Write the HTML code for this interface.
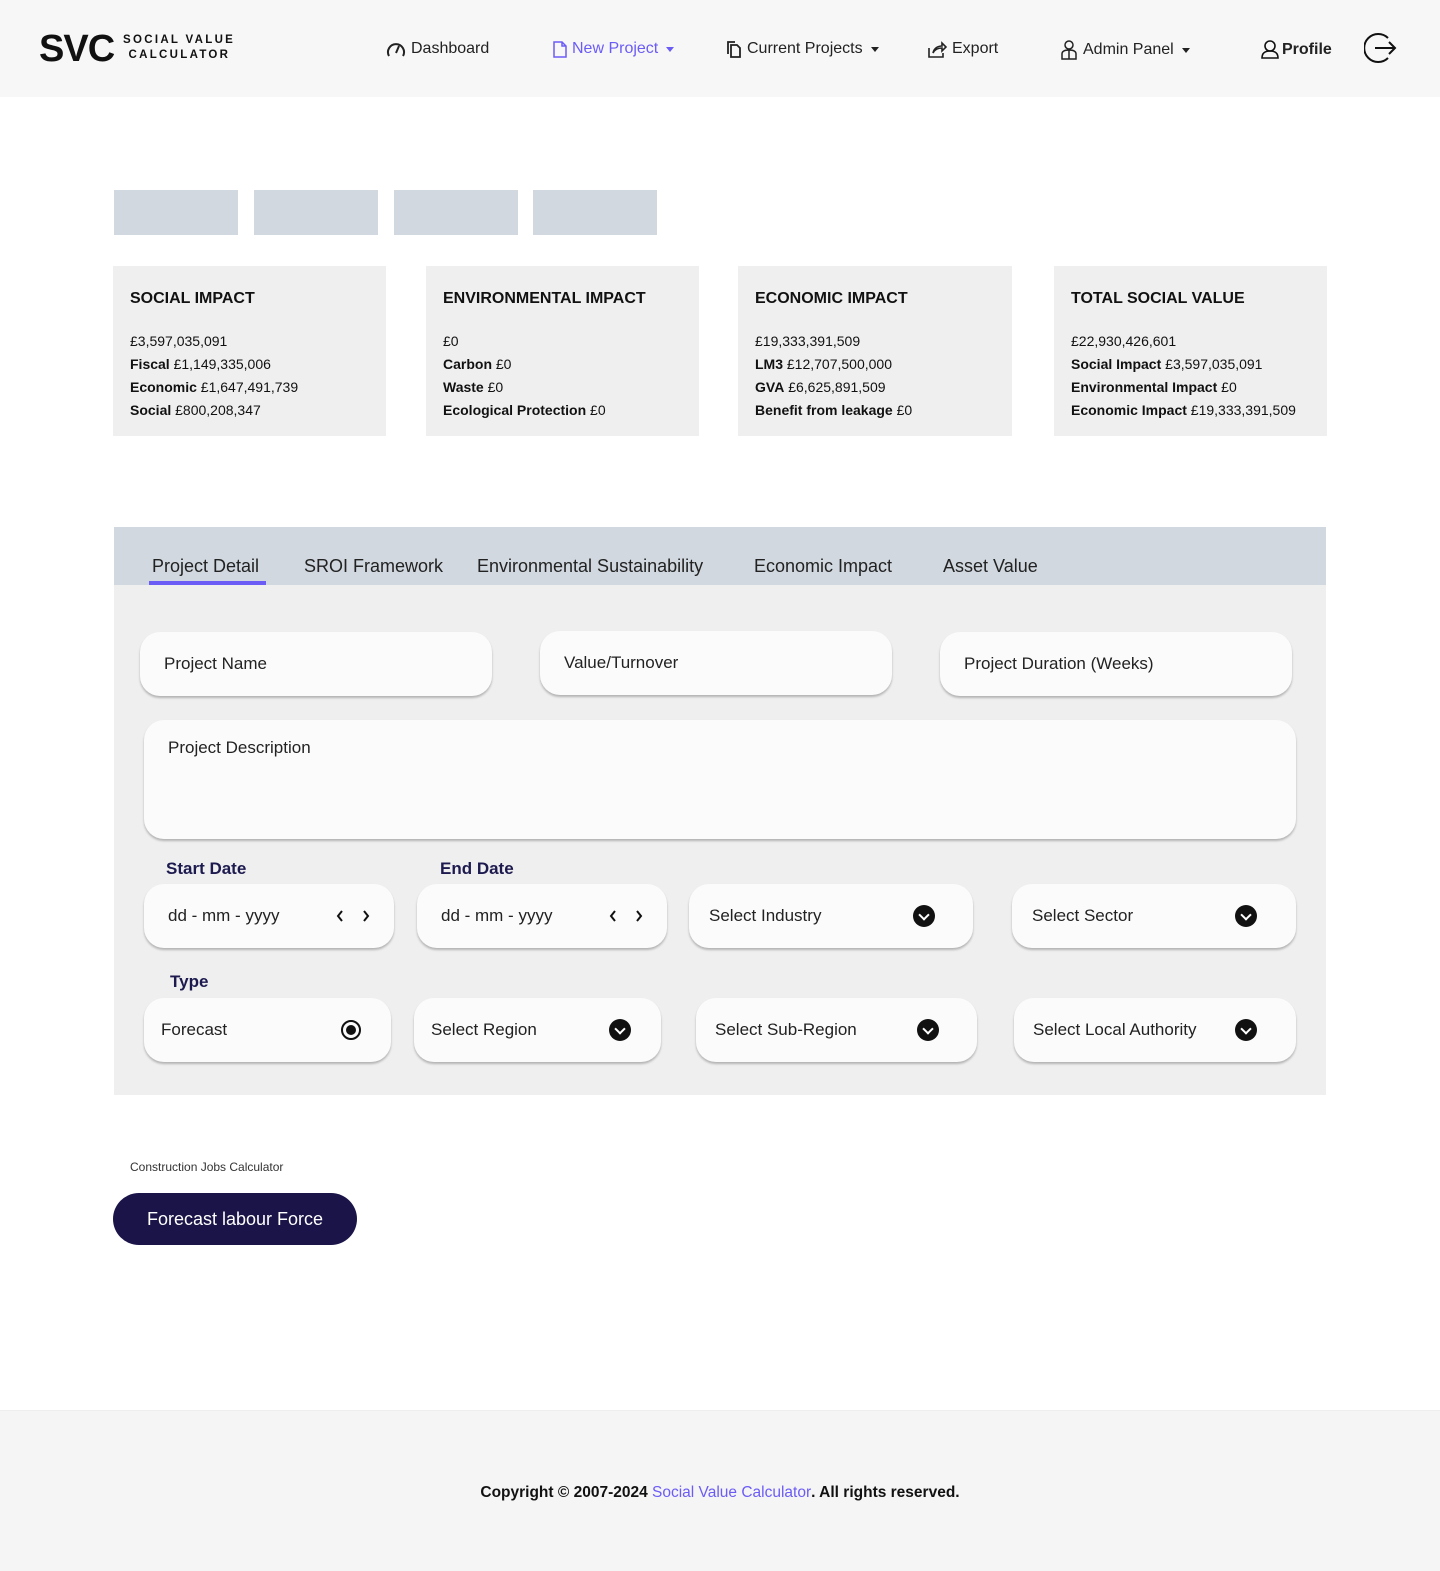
<!DOCTYPE html>
<html><head><meta charset="utf-8"><style>
*{box-sizing:border-box;margin:0;padding:0}
body{width:1440px;height:1571px;position:relative;background:#fff;font-family:"Liberation Sans",sans-serif;color:#111;overflow:hidden}
.a{position:absolute}
header{position:absolute;left:0;top:0;width:1440px;height:97px;background:#f7f7f7}
.nav{position:absolute;top:40px;font-size:16px;color:#222;display:flex;align-items:center;gap:5px;white-space:nowrap}
.caret{display:inline-block;width:0;height:0;border-left:4.5px solid transparent;border-right:4.5px solid transparent;border-top:5px solid currentColor;margin-left:3px}
.blk{position:absolute;top:190px;width:124px;height:45px;background:#d1d8e0}
.card{position:absolute;top:266px;height:170px;background:#efefef;padding:23px 17px;font-size:14px;line-height:23px}
.card h3{font-size:16px;font-weight:bold;margin-bottom:21px;line-height:20px}
.card b{font-weight:bold}
.inp{position:absolute;background:#fbfbfb;border-radius:20px;box-shadow:0 2px 2px rgba(0,0,0,.25);font-size:17px;color:#222;display:flex;align-items:center;padding-left:24px}
.lbl{position:absolute;font-size:17px;color:#1d1a4f;font-weight:bold}
.dd{position:absolute;width:22px;height:22px;border-radius:50%;background:#111;top:50%;margin-top:-11px}
.dd:after{content:"";position:absolute;left:7px;top:6px;width:6px;height:6px;border-right:2px solid #fff;border-bottom:2px solid #fff;transform:rotate(45deg)}
.chev{position:absolute;top:50%;margin-top:-6px}
.tab{position:absolute;top:556px;font-size:18px;color:#222}
</style></head><body>
<header>
 <div class="a" style="left:39px;top:29px;font-size:38px;font-weight:bold;letter-spacing:-1px;line-height:40px">SVC</div>
 <div class="a" style="left:123px;top:33px;font-size:11.5px;font-weight:bold;letter-spacing:2.3px;line-height:15px">SOCIAL VALUE<br>&nbsp;CALCULATOR</div>
 <div class="nav" style="left:386px"><svg width="20" height="18" viewBox="0 0 20 18"><path d="M3 16A8 8 0 1 1 17 16" fill="none" stroke="#222" stroke-width="2"/><path d="M10 13L13 6" stroke="#222" stroke-width="2"/></svg>Dashboard</div>
 <div class="nav" style="left:553px;color:#6b5cf6"><svg width="14" height="17" viewBox="0 0 14 17"><path d="M1 1h8l4 4v11H1z M9 1v4h4" fill="none" stroke="#6b5cf6" stroke-width="1.5"/></svg>New Project<span class="caret"></span></div>
 <div class="nav" style="left:726px"><svg width="16" height="17" viewBox="0 0 16 17"><path d="M5 4h6l3 3v9H5z M2 13V1h7" fill="none" stroke="#222" stroke-width="1.8"/></svg>Current Projects<span class="caret"></span></div>
 <div class="nav" style="left:928px"><svg width="19" height="17" viewBox="0 0 19 17"><path d="M1 7v9h14v-4 M5 12c1-5 5-7 9-7V2l4 4-4 4V7c-3 0-7 1-9 5z" fill="none" stroke="#222" stroke-width="1.6"/></svg>Export</div>
 <div class="nav" style="left:1060px"><svg width="18" height="20" viewBox="0 0 18 20"><circle cx="9" cy="5" r="4" fill="none" stroke="#222" stroke-width="1.5"/><path d="M2 19v-5c0-3 3-4 7-4s7 1 7 4v5z M9 10v9" fill="none" stroke="#222" stroke-width="1.5"/></svg>Admin Panel<span class="caret"></span></div>
 <div class="nav" style="left:1260px;font-weight:bold;gap:2px"><svg width="20" height="19" viewBox="0 0 20 19"><circle cx="10" cy="6" r="5" fill="none" stroke="#111" stroke-width="1.6"/><path d="M2 18c0-5 3-7 8-7s8 2 8 7z" fill="none" stroke="#111" stroke-width="1.6"/></svg>Profile</div>
 <svg class="a" style="left:1364px;top:32px" width="34" height="32" viewBox="0 0 34 32"><path d="M24 6A14 14 0 1 0 24 26" fill="none" stroke="#111" stroke-width="2"/><path d="M11 16h20 M25 10l6 6-6 6" fill="none" stroke="#111" stroke-width="2"/></svg>
</header>

<div class="blk" style="left:114px"></div><div class="blk" style="left:254px"></div><div class="blk" style="left:394px"></div><div class="blk" style="left:533px"></div>

<div class="card" style="left:113px;width:273px"><h3>SOCIAL IMPACT</h3>£3,597,035,091<br><b>Fiscal</b> £1,149,335,006<br><b>Economic</b> £1,647,491,739<br><b>Social</b> £800,208,347</div>
<div class="card" style="left:426px;width:273px"><h3>ENVIRONMENTAL IMPACT</h3>£0<br><b>Carbon</b> £0<br><b>Waste</b> £0<br><b>Ecological Protection</b> £0</div>
<div class="card" style="left:738px;width:274px"><h3>ECONOMIC IMPACT</h3>£19,333,391,509<br><b>LM3</b> £12,707,500,000<br><b>GVA</b> £6,625,891,509<br><b>Benefit from leakage</b> £0</div>
<div class="card" style="left:1054px;width:273px"><h3>TOTAL SOCIAL VALUE</h3>£22,930,426,601<br><b>Social Impact</b> £3,597,035,091<br><b>Environmental Impact</b> £0<br><b>Economic Impact</b> £19,333,391,509</div>

<div class="a" style="left:114px;top:527px;width:1212px;height:568px;background:#efefef"></div>
<div class="a" style="left:114px;top:527px;width:1212px;height:58px;background:#d1d8e0"></div>
<div class="tab" style="left:152px">Project Detail</div>
<div class="a" style="left:149px;top:581px;width:117px;height:4px;background:#6b5cf6"></div>
<div class="tab" style="left:304px">SROI Framework</div>
<div class="tab" style="left:477px">Environmental Sustainability</div>
<div class="tab" style="left:754px">Economic Impact</div>
<div class="tab" style="left:943px">Asset Value</div>

<div class="inp" style="left:140px;top:632px;width:352px;height:64px">Project Name</div>
<div class="inp" style="left:540px;top:631px;width:352px;height:64px">Value/Turnover</div>
<div class="inp" style="left:940px;top:632px;width:352px;height:64px">Project Duration (Weeks)</div>
<div class="inp" style="left:144px;top:720px;width:1152px;height:119px;align-items:flex-start;padding-top:18px">Project Description</div>

<div class="lbl" style="left:166px;top:859px">Start Date</div>
<div class="lbl" style="left:440px;top:859px">End Date</div>
<div class="inp" style="left:144px;top:884px;width:250px;height:64px">dd - mm - yyyy<svg class="chev" style="left:192px" width="8" height="12" viewBox="0 0 8 12"><path d="M6 1L2 6l4 5" fill="none" stroke="#111" stroke-width="2"/></svg><svg class="chev" style="left:218px" width="8" height="12" viewBox="0 0 8 12"><path d="M2 1l4 5-4 5" fill="none" stroke="#111" stroke-width="2"/></svg></div>
<div class="inp" style="left:417px;top:884px;width:250px;height:64px">dd - mm - yyyy<svg class="chev" style="left:192px" width="8" height="12" viewBox="0 0 8 12"><path d="M6 1L2 6l4 5" fill="none" stroke="#111" stroke-width="2"/></svg><svg class="chev" style="left:218px" width="8" height="12" viewBox="0 0 8 12"><path d="M2 1l4 5-4 5" fill="none" stroke="#111" stroke-width="2"/></svg></div>
<div class="inp" style="left:689px;top:884px;width:284px;height:64px;padding-left:20px">Select Industry<span class="dd" style="left:224px"></span></div>
<div class="inp" style="left:1012px;top:884px;width:284px;height:64px;padding-left:20px">Select Sector<span class="dd" style="left:223px"></span></div>

<div class="lbl" style="left:170px;top:972px">Type</div>
<div class="inp" style="left:144px;top:998px;width:247px;height:64px;padding-left:17px">Forecast<span class="a" style="left:197px;top:22px;width:20px;height:20px;border:2px solid #111;border-radius:50%"><span class="a" style="left:3px;top:3px;width:10px;height:10px;background:#111;border-radius:50%"></span></span></div>
<div class="inp" style="left:414px;top:998px;width:247px;height:64px;padding-left:17px">Select Region<span class="dd" style="left:195px"></span></div>
<div class="inp" style="left:696px;top:998px;width:281px;height:64px;padding-left:19px">Select Sub-Region<span class="dd" style="left:221px"></span></div>
<div class="inp" style="left:1014px;top:998px;width:282px;height:64px;padding-left:19px">Select Local Authority<span class="dd" style="left:221px"></span></div>

<div class="a" style="left:130px;top:1160px;font-size:12px;color:#333">Construction Jobs Calculator</div>
<div class="a" style="left:113px;top:1193px;width:244px;height:52px;background:#1a1448;border-radius:26px;color:#fff;font-size:18px;display:flex;align-items:center;justify-content:center">Forecast labour Force</div>

<div class="a" style="left:0;top:1410px;width:1440px;height:161px;background:#f5f5f5;border-top:1px solid #eee"></div>
<div class="a" style="left:0;top:1484px;width:1440px;text-align:center;font-size:15.5px;font-weight:bold;color:#111">Copyright © 2007-2024 <span style="color:#6b5cf6;font-weight:normal">Social Value Calculator</span>. All rights reserved.</div>
</body></html>
